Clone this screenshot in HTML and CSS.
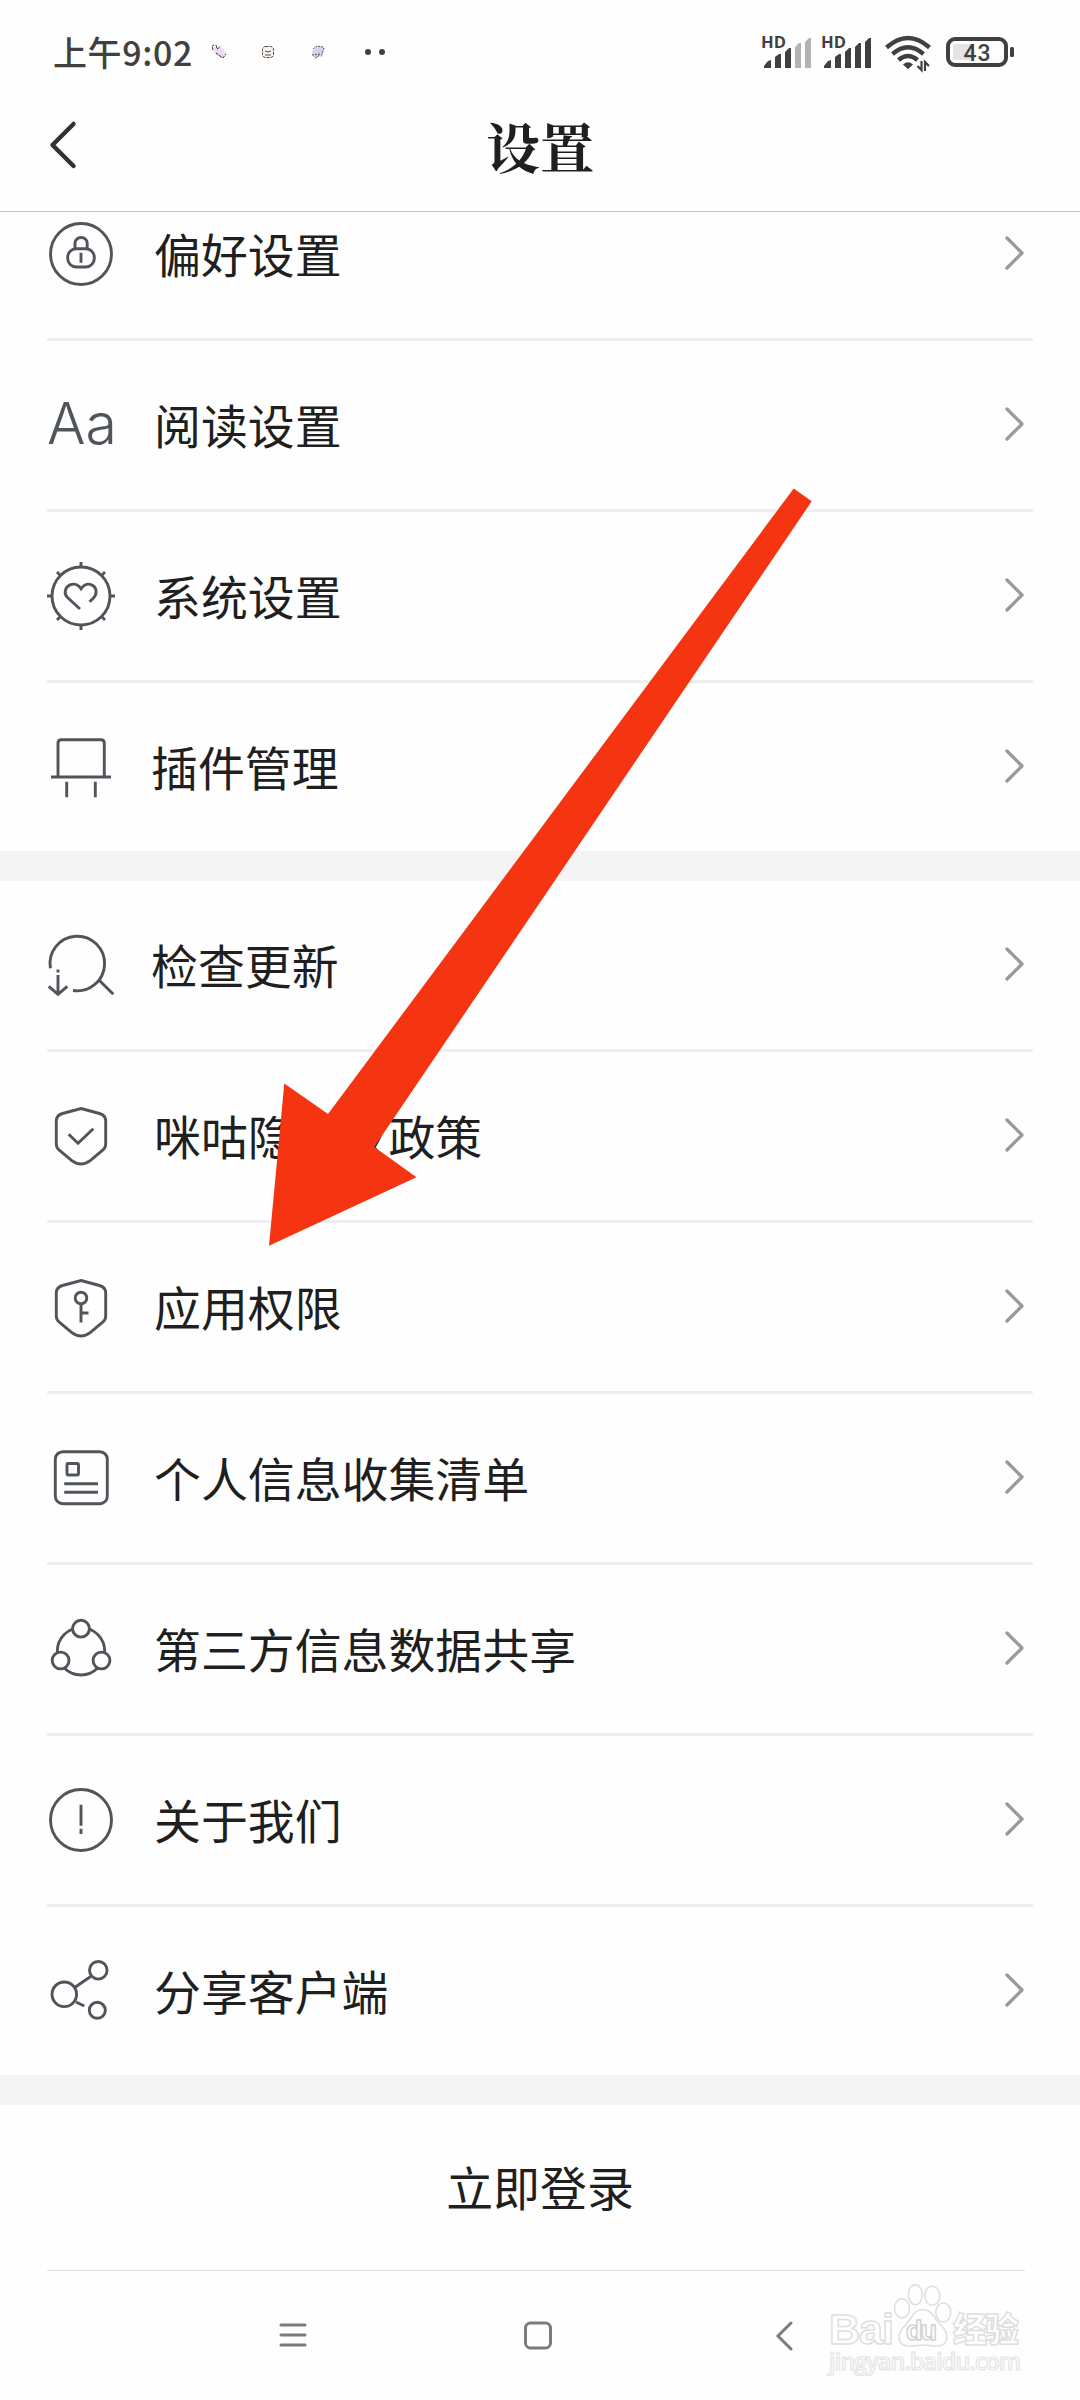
FILE: index.html
```html
<!DOCTYPE html>
<html lang="zh-CN">
<head>
    <meta charset="UTF-8">
    <meta name="viewport" content="width=device-width, initial-scale=1.0">
    <title>设置</title>
    <link rel="stylesheet" href="styles.css">
</head>
<body>
    <div class="screen">
        <div class="top">
            <div class="status-bar">
                <span class="time">上午9:02</span>
                <svg class="notices" width="180" height="40" viewBox="0 0 180 40">
                    <path d="M7 15l4 1 3-3 7 9-5 5-7-5z" fill="#eedcf3"/>
                    <path d="M7 18l-1-4 2-1M10 13l1 4 3-2M10 21l7 5 3-4" fill="none" stroke="#333" stroke-width="1" stroke-dasharray="3 1"/>
                    <rect x="56.5" y="14.5" width="11" height="11" rx="3" fill="#f8f1ec" stroke="#444" stroke-dasharray="3 1"/>
                    <path d="M59 19l3 1 3-1M59 23h6" fill="none" stroke="#555"/>
                    <path d="M106 20l5-6 7 1-1 7-6 4-4-1z" fill="#cfd5ea"/>
                    <path d="M107 17l4-3 6 1M118 16l-3 9M106 23l8-1M109 26l5-3" fill="none" stroke="#555" stroke-dasharray="2 1"/>
                    <circle cx="162" cy="20" r="3" fill="#404040"/>
                    <circle cx="176" cy="20" r="3" fill="#404040"/>
                </svg>
                <svg class="signals" width="260" height="44" viewBox="0 0 260 44">
                    <g fill="#404040">
                        <text class="hd" x="1" y="18" textLength="25" lengthAdjust="spacingAndGlyphs">HD</text>
                        <path d="M4 38v-2l4-5 3-1v8zM15 38V27l4-3h2v14zM25 38V22l4-4h2v20z"/>
                        <path d="M35 38V17l4-4h2v25zM45 38V12l4-4h2v30z" fill="#b3b3b3"/>
                        <text class="hd" x="61" y="18" textLength="25" lengthAdjust="spacingAndGlyphs">HD</text>
                        <path d="M64 38v-2l4-5 3-1v8zM75 38V27l4-3h2v14zM85 38V22l4-4h2v20zM95 38V17l4-4h2v25zM105 38V12l4-4h2v30z"/>
                        <path d="M143 34.5q5-4.5 10 0l-5 4.7z"/>
                    </g>
                    <g fill="none" stroke="#404040" stroke-width="4.4">
                        <path d="M126.5 17.5q21.5-19 43 0M132.5 24q15.5-13.5 31 0M138.5 30q9.5-8 19 0"/>
                        <rect x="188" y="9" width="58" height="26" rx="7" stroke-width="4"/>
                        <path d="M161.5 31v9l-4-4M165 41v-9l4 4" stroke-width="2.2"/>
                    </g>
                    <rect x="193" y="14" width="20" height="16" rx="3" fill="#e4e4e4"/>
                    <rect x="250" y="17" width="4" height="10" rx="1.5" fill="#404040"/>
                    <text class="battery" x="203.5" y="31" textLength="27">43</text>
                </svg>
            </div>
            <div class="header">
                <svg class="back" width="40" height="56" viewBox="0 0 40 56"><path d="M27.5 7L6.5 28l21 21"/></svg>
                <h1 class="title">设置</h1>
            </div>
        </div>

        <div class="list">
            <div class="group">
                <div class="row">
                    <svg class="icon" viewBox="0 0 68 68"><circle cx="34" cy="34" r="30.5"/><rect x="20.7" y="28.7" width="26.6" height="18.3" rx="8.5"/><path d="M28 28.5v-5.5a6.1 5.5 0 0 1 12.2 0v5.5M34 32.7v10"/></svg>
                    <span class="label">偏好设置</span>
                    <svg class="chevron" viewBox="0 0 20 36"><path d="M3 3l15 15L3 33"/></svg>
                </div>
                <div class="row">
                    <svg class="icon" viewBox="0 0 68 68"><text class="letters" x="0" y="53" textLength="70" lengthAdjust="spacingAndGlyphs">Aa</text></svg>
                    <span class="label">阅读设置</span>
                    <svg class="chevron" viewBox="0 0 20 36"><path d="M3 3l15 15L3 33"/></svg>
                </div>
                <div class="row">
                    <svg class="icon" viewBox="0 0 68 68"><circle cx="34" cy="34" r="29"/><path d="M34 0v5M34 63v5M0 34h5M63 34h5M10 10l4 4M58 10l-4 4M10 58l4-4M58 58l-4-4"/><path d="M33 47L20.5 35.5C16.5 31.5 18 25 23 22.8c4-1.5 8.500 0 11 4 3-4 7-5.500 10.500-4C50 25.200 50.500 32 46.500 36l-4 3.800"/></svg>
                    <span class="label">系统设置</span>
                    <svg class="chevron" viewBox="0 0 20 36"><path d="M3 3l15 15L3 33"/></svg>
                </div>
                <div class="row shifted">
                    <svg class="icon" viewBox="0 0 68 68"><path d="M11 44V10q0-3.3 3.3-3.3H54q3.3 0 3.3 3.3v34M4 44h60M19.7 48.7v15.6M48.3 48.7v15.6"/></svg>
                    <span class="label">插件管理</span>
                    <svg class="chevron" viewBox="0 0 20 36"><path d="M3 3l15 15L3 33"/></svg>
                </div>
            </div>

            <div class="group">
                <div class="row shifted">
                    <svg class="icon" viewBox="0 0 68 68"><path d="M3.4 37.3A27.3 27.3 0 1 1 26 59.5M52.7 49.7l13.6 13.6M11 44v19M1.700 55.300l9.300 8 9.300-8M11 38.500v3"/></svg>
                    <span class="label">检查更新</span>
                    <svg class="chevron" viewBox="0 0 20 36"><path d="M3 3l15 15L3 33"/></svg>
                </div>
                <div class="row">
                    <svg class="icon" viewBox="0 0 68 68"><path d="M34 6.5l18.5 5q6.2 1.7 6.2 7.5v23q0 3.500-2.700 5.800L43.500 58.300q-9.500 7.200-19 0L12 47.800q-2.700-2.300-2.700-5.800V19q0-5.800 6.200-7.500zM21.700 32.300l9.300 9 15.300-14.600"/></svg>
                    <span class="label">咪咕隐私权政策</span>
                    <svg class="chevron" viewBox="0 0 20 36"><path d="M3 3l15 15L3 33"/></svg>
                </div>
                <div class="row">
                    <svg class="icon" viewBox="0 0 68 68"><path d="M34 7.5l18.5 5q6.2 1.7 6.2 7.5v23q0 3.500-2.700 5.800L43.500 59.300q-9.500 7.200-19 0L12 48.800q-2.700-2.300-2.700-5.800V20q0-5.800 6.200-7.500z"/><circle cx="34" cy="25" r="5.8"/><path d="M34 31v18.500M34 40h7.500"/></svg>
                    <span class="label">应用权限</span>
                    <svg class="chevron" viewBox="0 0 20 36"><path d="M3 3l15 15L3 33"/></svg>
                </div>
                <div class="row">
                    <svg class="icon" viewBox="0 0 68 68"><rect x="8.3" y="7.7" width="52" height="52" rx="7.5"/><rect x="20" y="19.5" width="11.5" height="11.5" rx="1"/><path d="M17.2 39.7H51M17.2 48.3H51"/></svg>
                    <span class="label">个人信息收集清单</span>
                    <svg class="chevron" viewBox="0 0 20 36"><path d="M3 3l15 15L3 33"/></svg>
                </div>
                <div class="row">
                    <svg class="icon nodes" viewBox="0 0 68 68"><circle cx="34" cy="36.3" r="23.7"/><circle cx="34" cy="13.7" r="8.4"/><circle cx="13.6" cy="45.5" r="8.4"/><circle cx="54.5" cy="45.5" r="8.4"/></svg>
                    <span class="label">第三方信息数据共享</span>
                    <svg class="chevron" viewBox="0 0 20 36"><path d="M3 3l15 15L3 33"/></svg>
                </div>
                <div class="row">
                    <svg class="icon" viewBox="0 0 68 68"><circle cx="34" cy="34" r="30.5"/><path d="M34 18.7v21M34 42.7V48"/></svg>
                    <span class="label">关于我们</span>
                    <svg class="chevron" viewBox="0 0 20 36"><path d="M3 3l15 15L3 33"/></svg>
                </div>
                <div class="row">
                    <svg class="icon" viewBox="0 0 68 68"><circle cx="17.3" cy="37.3" r="12.3"/><circle cx="51.3" cy="13.3" r="8.8"/><circle cx="50.3" cy="53.3" r="8"/><path d="M28 30.3l15.7-10.8M29 45l8.3 4"/></svg>
                    <span class="label">分享客户端</span>
                    <svg class="chevron" viewBox="0 0 20 36"><path d="M3 3l15 15L3 33"/></svg>
                </div>
            </div>

            <div class="login"><span class="label">立即登录</span></div>
        </div>

        <div class="nav-bar">
            <svg viewBox="0 0 32 32"><path d="M4 5h24M4 15h24M4 25h24"/></svg>
            <svg viewBox="0 0 32 32"><rect x="2.5" y="3" width="25" height="25" rx="5"/></svg>
            <svg viewBox="0 0 32 32"><path d="M22 3L9 16l13 13"/></svg>
        </div>

        <svg class="pointer" width="550" height="762" viewBox="266 486 550 762"><path d="M793.7 488.5l18 12.8L374.3 1147l42.2 30.3L269 1245.8l15.300-162.300L328 1114z"/></svg>

        <svg class="watermark" width="200" height="96" viewBox="825 2280 200 96">
            <g class="mark">
                <text class="bai" x="829" y="2344" textLength="65">Bai</text>
                <ellipse cx="902" cy="2308.3" rx="7.5" ry="9.5"/>
                <ellipse cx="915.3" cy="2294.7" rx="7" ry="10"/>
                <ellipse cx="932.3" cy="2295.7" rx="7.5" ry="9.5"/>
                <ellipse cx="943.3" cy="2312.5" rx="7.5" ry="9.5"/>
                <path d="M922.5 2309.5c8 0 11 6 15 12 4 5 9.5 8 9.5 15 0 7-5 9.500-10 9.500-6 0-9-1-14-1s-8 1-13 1c-7 0-11-3-11-9 0-7 5-10 9-15 5-6 7-12.500 14.500-12.500z"/>
                <text class="du" x="906" y="2340" textLength="31">du</text>
                <text class="cn" x="953" y="2342" textLength="66">经验</text>
                <text class="url" x="829" y="2370" textLength="192">jingyan.baidu.com</text>
            </g>
        </svg>
    </div>
</body>
</html>
```

FILE: styles.css
```css
* {
    margin: 0;
    padding: 0;
    box-sizing: border-box;
}
body {
    background: #fefefe;
    color: #1f1f1f;
    font-family: "Noto Sans CJK SC", sans-serif;
}
.screen {
    position: relative;
    display: flex;
    flex-direction: column;
    width: 1080px;
    height: 2400px;
    overflow: hidden;
    background: #fefefe;
}
.top {
    flex: none;
    height: 212px;
    border-bottom: 1px solid #c4c5c6;
}
.status-bar {
    display: flex;
    align-items: center;
    height: 79px;
    padding: 25px 60px 0 53px;
}
.time {
    width: 147px;
    font-size: 34px;
    font-weight: 500;
    line-height: 50px;
    letter-spacing: 0.6px;
    white-space: nowrap;
    color: #404040;
}
.notices {
    margin-left: 6px;
}
.signals {
    margin-left: auto;
}
.hd {
    font-family: "Open Sans", sans-serif;
    font-size: 16.5px;
    font-weight: 700;
}
.battery {
    font-family: Roboto, sans-serif;
    font-size: 23px;
    font-weight: 500;
    fill: #404040;
}
.header {
    display: grid;
    grid-template-columns: 1fr auto 1fr;
    align-items: center;
    height: 132px;
    padding: 0 46px;
}
.back {
    fill: none;
    stroke: #2e3338;
    stroke-width: 4.5px;
    stroke-linecap: round;
    stroke-linejoin: round;
}
.title {
    padding-top: 1px;
    font-family: "Noto Serif CJK SC", "Noto Sans CJK SC", serif;
    font-size: 54px;
    font-weight: 700;
    line-height: 80px;
}
/* scrolled so the first row starts under the header */
.list {
    flex: none;
    height: 2058px;
    overflow: hidden;
}
.group {
    border-bottom: 30px solid #f4f4f4;
}
.group:first-child {
    margin-top: -42px;
}
.row {
    display: flex;
    align-items: center;
    height: 171px;
    margin: 0 47px;
    padding-right: 9px;
    border-bottom: 3px solid #efefef;
}
.row:last-child {
    height: 168px;
    border-bottom: none;
}
.icon {
    flex: none;
    width: 68px;
    height: 68px;
    margin-right: 39px;
    overflow: visible;
    fill: none;
    stroke: #50545b;
    stroke-width: 2.9px;
}
.shifted .icon {
    margin-right: 36px;
}
.nodes circle {
    fill: #fefefe;
}
.letters {
    font-family: Inter, sans-serif;
    font-size: 57px;
    font-weight: 300;
    fill: #50545b;
    stroke: none;
}
.label {
    padding-bottom: 3px;
    font-size: 46.9px;
    line-height: 64px;
    white-space: nowrap;
}
.chevron {
    width: 20px;
    height: 36px;
    margin-left: auto;
    margin-bottom: 2px;
    fill: none;
    stroke: #999;
    stroke-width: 3.3px;
    stroke-linecap: round;
    stroke-linejoin: round;
}
.login {
    display: flex;
    justify-content: center;
    align-items: center;
    height: 165px;
}
.nav-bar {
    display: flex;
    justify-content: space-between;
    height: 130px;
    margin: 0 55px 0 47px;
    padding: 49px 224px 0 230px;
    border-top: 1px solid #e2e2e2;
}
.nav-bar svg {
    width: 32px;
    height: 32px;
    fill: none;
    stroke: #7b7b7b;
    stroke-width: 3px;
    stroke-linecap: round;
}
.pointer {
    position: absolute;
    left: 266px;
    top: 486px;
    fill: #f53411;
}
.watermark {
    position: absolute;
    left: 825px;
    top: 2280px;
}
.mark {
    fill: #fefefe;
    stroke: #dedede;
    stroke-width: 1.5px;
    font-family: "Liberation Sans", sans-serif;
}
.bai {
    font-size: 43px;
    font-weight: 700;
}
.du {
    font-size: 27px;
    font-weight: 700;
    stroke: #d2d2d2;
}
.cn {
    font-family: "Noto Sans CJK SC", sans-serif;
    font-size: 34px;
    font-weight: 900;
}
.url {
    font-family: "Open Sans", sans-serif;
    font-size: 23px;
    font-weight: 600;
    stroke: #e4e4e4;
    stroke-width: 1.2px;
}
```
